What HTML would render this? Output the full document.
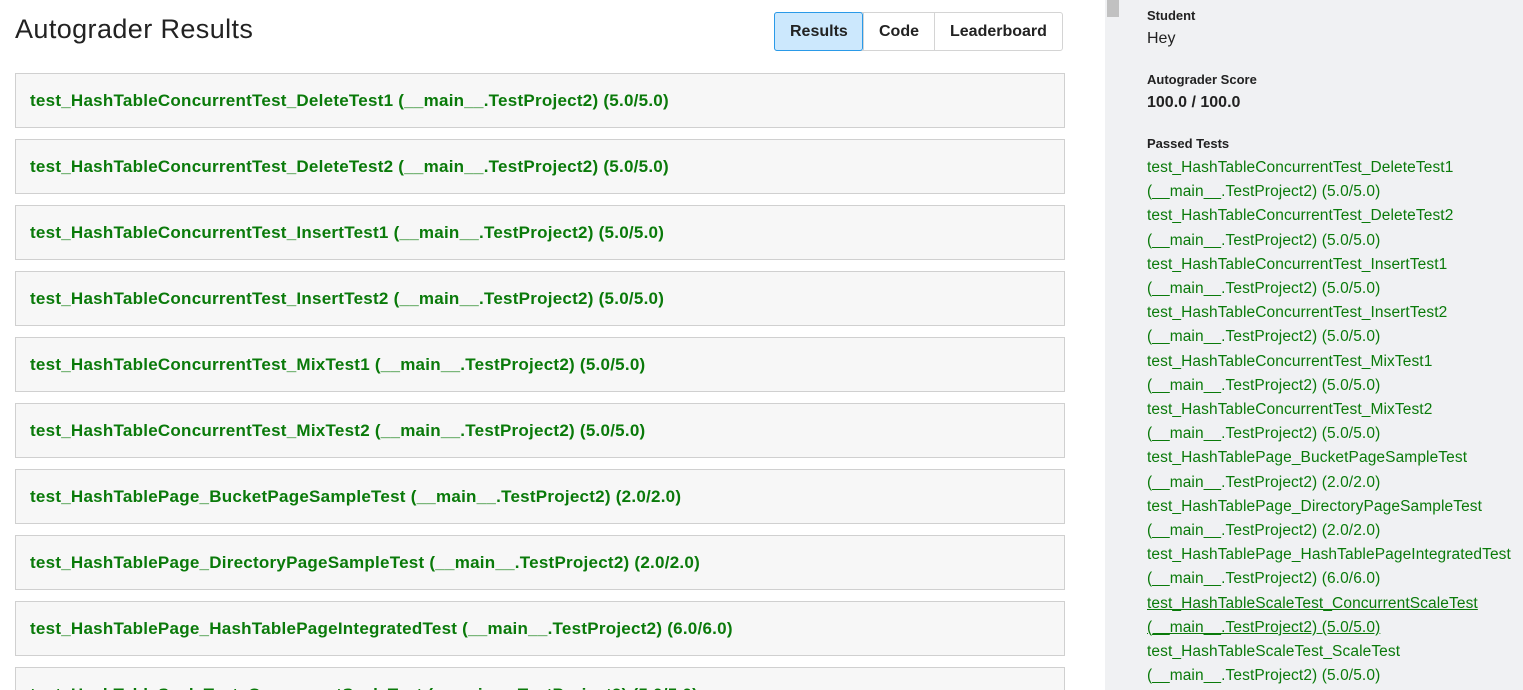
<!DOCTYPE html>
<html><head><style>
*{margin:0;padding:0;box-sizing:border-box}
html,body{width:1523px;height:690px;overflow:hidden}
body{background:#fff;font-family:"Liberation Sans",sans-serif;position:relative}
h1{position:absolute;left:15px;top:14px;font-size:27px;font-weight:400;color:#222;letter-spacing:0.4px}
.tabs{position:absolute;left:774px;top:12px;height:39px;display:flex;border:1px solid #d4d4d4;border-radius:3px}
.tabs div{font-size:16px;font-weight:bold;color:#222;line-height:37px;padding:0 15px;border-left:1px solid #d4d4d4}
.tabs div:first-child{border:1px solid #2a9ae8;background:#cce8fd;border-radius:3px;margin:-1px 0 -1px -1px;line-height:37px;width:89px;text-align:center}
.card{position:absolute;left:15px;width:1050px;height:55px;background:#f7f7f7;border:1px solid #d0d0d0}
.card span{position:absolute;left:14px;top:17px;font-size:17px;font-weight:bold;color:#0a7a0a;white-space:nowrap;letter-spacing:0.25px}
.side{position:absolute;left:1105px;top:0;width:418px;height:690px;background:#f0f1f3}
.thumb{position:absolute;left:1107px;top:0;width:12px;height:17px;background:#c1c1c1}
.lbl{position:absolute;left:1147px;font-size:13px;font-weight:bold;color:#222}
.val{position:absolute;left:1147px;font-size:16px;color:#222}
.list{position:absolute;left:1147px;top:156px;font-size:15.5px;line-height:24.2px;color:#0a7a0a;white-space:nowrap;letter-spacing:0.1px}
</style></head><body>
<h1>Autograder Results</h1>
<div class="tabs"><div>Results</div><div>Code</div><div>Leaderboard</div></div>
<div class="card" style="top:73px"><span>test_HashTableConcurrentTest_DeleteTest1 (__main__.TestProject2) (5.0/5.0)</span></div>
<div class="card" style="top:139px"><span>test_HashTableConcurrentTest_DeleteTest2 (__main__.TestProject2) (5.0/5.0)</span></div>
<div class="card" style="top:205px"><span>test_HashTableConcurrentTest_InsertTest1 (__main__.TestProject2) (5.0/5.0)</span></div>
<div class="card" style="top:271px"><span>test_HashTableConcurrentTest_InsertTest2 (__main__.TestProject2) (5.0/5.0)</span></div>
<div class="card" style="top:337px"><span>test_HashTableConcurrentTest_MixTest1 (__main__.TestProject2) (5.0/5.0)</span></div>
<div class="card" style="top:403px"><span>test_HashTableConcurrentTest_MixTest2 (__main__.TestProject2) (5.0/5.0)</span></div>
<div class="card" style="top:469px"><span>test_HashTablePage_BucketPageSampleTest (__main__.TestProject2) (2.0/2.0)</span></div>
<div class="card" style="top:535px"><span>test_HashTablePage_DirectoryPageSampleTest (__main__.TestProject2) (2.0/2.0)</span></div>
<div class="card" style="top:601px"><span>test_HashTablePage_HashTablePageIntegratedTest (__main__.TestProject2) (6.0/6.0)</span></div>
<div class="card" style="top:667px"><span>test_HashTableScaleTest_ConcurrentScaleTest (__main__.TestProject2) (5.0/5.0)</span></div>
<div class="side"></div>
<div class="thumb"></div>
<div class="lbl" style="top:8px">Student</div>
<div class="val" style="top:30px">Hey</div>
<div class="lbl" style="top:72px">Autograder Score</div>
<div class="val" style="top:94px;font-weight:bold">100.0 / 100.0</div>
<div class="lbl" style="top:136px">Passed Tests</div>
<div class="list">
test_HashTableConcurrentTest_DeleteTest1<br>(__main__.TestProject2) (5.0/5.0)<br>
test_HashTableConcurrentTest_DeleteTest2<br>(__main__.TestProject2) (5.0/5.0)<br>
test_HashTableConcurrentTest_InsertTest1<br>(__main__.TestProject2) (5.0/5.0)<br>
test_HashTableConcurrentTest_InsertTest2<br>(__main__.TestProject2) (5.0/5.0)<br>
test_HashTableConcurrentTest_MixTest1<br>(__main__.TestProject2) (5.0/5.0)<br>
test_HashTableConcurrentTest_MixTest2<br>(__main__.TestProject2) (5.0/5.0)<br>
test_HashTablePage_BucketPageSampleTest<br>(__main__.TestProject2) (2.0/2.0)<br>
test_HashTablePage_DirectoryPageSampleTest<br>(__main__.TestProject2) (2.0/2.0)<br>
test_HashTablePage_HashTablePageIntegratedTest<br>(__main__.TestProject2) (6.0/6.0)<br>
<u>test_HashTableScaleTest_ConcurrentScaleTest<br>(__main__.TestProject2) (5.0/5.0)</u><br>
test_HashTableScaleTest_ScaleTest<br>(__main__.TestProject2) (5.0/5.0)
</div>
</body></html>
